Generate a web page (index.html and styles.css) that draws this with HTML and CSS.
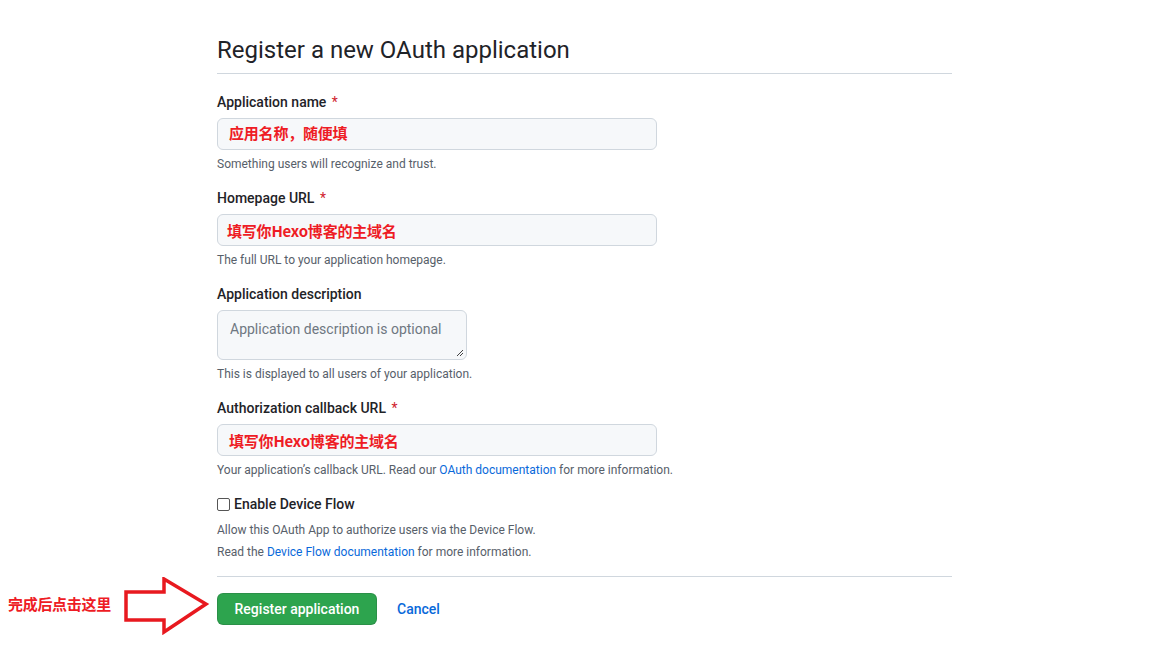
FILE: index.html
```html
<!DOCTYPE html>
<html lang="en">
<head>
<meta charset="utf-8">
<title>Register a new OAuth application</title>
<link rel="stylesheet" href="styles.css">
</head>
<body>
<main class="page">
  <div class="container">
    <div class="subhead">
      <h2 class="subhead-heading">Register a new OAuth application</h2>
    </div>
    <form class="form">
      <div class="group">
        <label class="label">Application name <span class="req">*</span></label>
        <div class="input input-wide"><span class="fill fill-up">应用名称，随便填</span></div>
        <p class="note">Something users will recognize and trust.</p>
      </div>
      <div class="group">
        <label class="label">Homepage URL <span class="req">*</span></label>
        <div class="input input-wide"><span class="fill fill-tight">填写你Hexo博客的主域名</span></div>
        <p class="note">The full URL to your application homepage.</p>
      </div>
      <div class="group">
        <label class="label">Application description</label>
        <div class="textarea"><span class="placeholder">Application description is optional</span>
          <svg class="grip" width="8" height="8" viewBox="0 0 8 8"><path d="M7 1 L1 7 M7 4 L4 7" stroke="#444" stroke-width="1"/></svg>
        </div>
        <p class="note">This is displayed to all users of your application.</p>
      </div>
      <div class="group">
        <label class="label">Authorization callback URL <span class="req">*</span></label>
        <div class="input input-wide"><span class="fill">填写你Hexo博客的主域名</span></div>
        <p class="note">Your application’s callback URL. Read our <a class="link">OAuth documentation</a> for more information.</p>
      </div>
      <div class="check-group">
        <label class="check-label"><span class="checkbox"></span>Enable Device Flow</label>
        <p class="note note-check">Allow this OAuth App to authorize users via the Device Flow.</p>
        <p class="note note-check">Read the <a class="link">Device Flow documentation</a> for more information.</p>
      </div>
      <div class="actions">
        <button type="button" class="btn-primary">Register application</button>
        <a class="cancel">Cancel</a>
      </div>
    </form>
  </div>
  <div class="annotation">
    <span class="annotation-text">完成后点击这里</span>
    <svg class="arrow" width="86" height="58" viewBox="0 0 86 58">
      <polygon points="2,15 40,15 40,2 82,27 40,55 40,43 2,43" fill="none" stroke="#e8191f" stroke-width="3.5" stroke-linejoin="miter"/>
    </svg>
  </div>
</main>
</body>
</html>
```

FILE: styles.css
```css
* { box-sizing: border-box; }
html, body { margin: 0; padding: 0; background: #fff; }
body {
  font-family: Roboto, "Liberation Sans", "Noto Sans CJK SC", sans-serif;
  color: #1f2328;
  font-size: 14px;
}
.page {
  position: relative;
  width: 1160px;
  height: 660px;
  padding-left: 217px;
  padding-top: 35px;
}
.container { width: 735px; }
.subhead {
  border-bottom: 1px solid #d0d7de;
  padding-bottom: 8px;
  margin-bottom: 18px;
}
.subhead-heading {
  margin: 0;
  font-size: 24px;
  font-weight: 400;
  line-height: 30px;
}
.form { display: flex; flex-direction: column; }
.group { display: flex; flex-direction: column; margin-bottom: 15px; }
.label {
  font-weight: 500;
  font-size: 14px;
  line-height: 20px;
  margin-bottom: 6px;
}
.req { color: #cf222e; font-weight: 400; margin-left: 2px; }
.input {
  height: 32px;
  background: #f6f8fa;
  border: 1px solid #d0d7de;
  border-radius: 6px;
  display: flex;
  align-items: center;
  padding-left: 11px;
}
.input-wide { width: 440px; }
.fill {
  font-family: "Noto Sans CJK SC", sans-serif;
  font-weight: 700;
  font-size: 15px;
  color: #ee1c25;
  letter-spacing: -0.2px;
}
.fill-up { margin-top: -4px; }
.fill-tight { margin-left: -2px; }
.textarea {
  position: relative;
  width: 250px;
  height: 50px;
  background: #f6f8fa;
  border: 1px solid #d0d7de;
  border-radius: 6px;
  padding: 8px 12px;
  font-size: 14px;
  line-height: 20px;
  color: #6e7781;
}
.grip { position: absolute; right: 2px; bottom: 2px; }
.note {
  margin: 5px 0 0;
  font-size: 12px;
  line-height: 18px;
  color: #57606a;
}
.link { color: #0969da; text-decoration: none; }
.check-group { display: flex; flex-direction: column; }
.check-label {
  display: flex;
  align-items: center;
  font-weight: 500;
  line-height: 20px;
}
.checkbox {
  width: 13px;
  height: 13px;
  border: 1px solid #555;
  border-radius: 2px;
  margin-right: 4px;
  background: #fff;
}
.note-check { margin-top: 8px; line-height: 16px; }
.note-check + .note-check { margin-top: 6px; }
.actions {
  margin-top: 16px;
  border-top: 1px solid #d0d7de;
  padding-top: 16px;
  display: flex;
  align-items: center;
}
.btn-primary {
  height: 32px;
  width: 160px;
  padding: 0;
  white-space: nowrap;
  border: 1px solid rgba(31,35,40,0.15);
  border-radius: 6px;
  background: #2da44e;
  color: #fff;
  font-family: inherit;
  font-size: 14px;
  font-weight: 500;
}
.cancel {
  margin-left: 20px;
  color: #0969da;
  font-weight: 500;
  font-size: 14px;
}
.annotation {
  position: absolute;
  left: 8px;
  top: 577px;
  display: flex;
  align-items: center;
}
.annotation-text {
  font-family: "Noto Sans CJK SC", sans-serif;
  font-weight: 700;
  font-size: 15px;
  color: #ee1c25;
  letter-spacing: -0.3px;
  width: 116px;
  padding-bottom: 5px;
}
.arrow { display: block; }
```
